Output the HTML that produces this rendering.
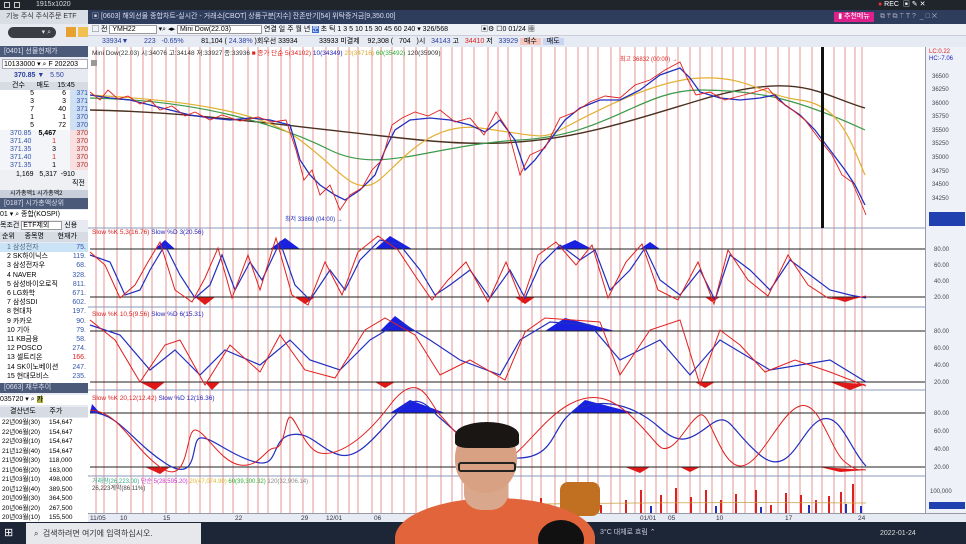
<!DOCTYPE html>
<html style="overflow:hidden;width:966px;height:544px"><head><meta charset="utf-8"><style>
*{margin:0;padding:0;box-sizing:border-box}
body{width:966px;height:544px;overflow:hidden;background:#dfe4ec;font-family:"Liberation Sans","Noto Sans CJK KR",sans-serif;font-size:7px;position:relative}
.a{position:absolute;white-space:nowrap}
</style></head><body>
<div class="a" style="left:0;top:0;width:966px;height:10px;background:#20242b;color:#ddd;font-size:7px;padding-left:36px;line-height:10px">1915x1020</div>
<div class="a" style="left:4px;top:2px;width:6px;height:6px;border:1px solid #ccc"></div>
<div class="a" style="left:14px;top:2px;width:6px;height:6px;border:1px solid #ccc"></div>
<div class="a" style="left:878px;top:0;color:#fff;font-size:7px;line-height:10px"><span style="color:#e33">●</span> REC &nbsp;▣ ✎ ✕</div>
<div class="a" style="left:0;top:10px;width:88px;height:512px;background:#e7eaf0"></div>
<div class="a" style="left:0;top:10px;width:88px;height:14px;background:#d9dde5;color:#333;line-height:14px;padding-left:6px">기능 주식 주식주문 ETF</div>
<div class="a" style="left:8px;top:27px;width:48px;height:11px;border-radius:6px;background:#3a3d44;color:#ddd;text-align:right;padding-right:5px;line-height:11px">▾ ⌕</div>
<div class="a" style="left:66px;top:27px;width:10px;height:10px;background:#e8a030"></div>
<div class="a" style="left:78px;top:27px;width:10px;height:10px;background:#f0c050"></div>
<div class="a" style="left:0;top:46px;width:88px;height:11px;background:#4a5a78;color:#dde;line-height:11px;padding-left:4px">[0401] 선물현재가</div>
<div class="a" style="left:2px;top:59px;width:86px;height:10px;background:#fff;border:1px solid #aab;line-height:9px;padding-left:1px">10133000 ▾ ⌕ F 202203</div>
<div class="a" style="left:0;top:71px;width:88px;height:10px;color:#2a3fa0;line-height:10px;padding-left:14px"><b>370.85 ▼</b> &nbsp; 5.50</div>
<div class="a" style="left:0;top:82px;width:88px;height:8px;background:#d6dbe4;line-height:8px;padding-left:12px">건수 &nbsp;&nbsp;&nbsp;&nbsp; 매도 &nbsp;&nbsp; 15:45</div>
<div class="a" style="left:0;top:90px;width:88px;height:40px;background:#fff"></div>
<div class="a" style="left:70px;top:90px;width:18px;height:40px;background:#cfe0f4;color:#35a;line-height:8px;text-align:right">371<br>371<br>371<br>370<br>370</div>
<div class="a" style="left:20px;top:90px;line-height:8px;text-align:right;width:14px">5<br>3<br>7<br>1<br>5</div>
<div class="a" style="left:48px;top:90px;line-height:8px;text-align:right;width:18px">6<br>3<br>40<br>1<br>72</div>
<div class="a" style="left:0;top:130px;width:70px;height:40px;background:#f3f5f8;color:#35a;line-height:8px;padding-left:10px">370.85<br>371.40<br>371.35<br>371.40<br>371.35</div>
<div class="a" style="left:70px;top:130px;width:18px;height:40px;background:#f8e0e0;color:#a33;line-height:8px;text-align:right">370<br>370<br>370<br>370<br>370</div>
<div class="a" style="left:38px;top:130px;line-height:8px;text-align:right;width:18px"><b>5,467</b><br><span style="color:#d22">1</span><br>3<br><span style="color:#d22">1</span><br>1</div>
<div class="a" style="left:0;top:170px;width:88px;height:20px;background:#eef0f4;line-height:9px;padding-left:16px">1,169 &nbsp; 5,317 &nbsp;-910<br><span style="margin-left:56px">직전</span></div>
<div class="a" style="left:0;top:190px;width:88px;height:8px;background:#c8ceda;font-size:6px;line-height:8px;padding-left:10px">시가총액1 시가총액2</div>
<div class="a" style="left:0;top:198px;width:88px;height:11px;background:#4a5a78;color:#dde;line-height:11px;padding-left:4px">[0187] 시가총액상위</div>
<div class="a" style="left:0;top:210px;width:88px;height:10px;background:#fff;line-height:10px">01 ▾ ⌕ 종합(KOSPI)</div>
<div class="a" style="left:0;top:221px;width:88px;height:10px;line-height:10px">목조건 <span style="background:#fff;border:1px solid #999;padding:0 12px 0 1px">ETF제외</span> 신용</div>
<div class="a" style="left:0;top:232px;width:88px;height:10px;background:#d6dbe4;line-height:10px;padding-left:2px">순위 &nbsp;&nbsp;&nbsp; 종목명 &nbsp;&nbsp;&nbsp;&nbsp;&nbsp; 현재가</div>
<div class="a" style="left:0;top:243px;width:88px;height:144px;background:#fff;line-height:9.2px;padding-left:7px">1 삼성전자<br>2 SK하이닉스<br>3 삼성전자우<br>4 NAVER<br>5 삼성바이오로직<br>6 LG화학<br>7 삼성SDI<br>8 현대차<br>9 카카오<br>10 기아<br>11 KB금융<br>12 POSCO<br>13 셀트리온<br>14 SK이노베이션<br>15 현대모비스</div>
<div class="a" style="left:0;top:243px;width:88px;height:9px;background:rgba(150,200,240,.5)"></div>
<div class="a" style="left:68px;top:243px;line-height:9.2px;color:#35a;text-align:right;width:18px">75.<br>119.<br>68.<br>328.<br>811.<br>671.<br>602.<br>197.<br>90.<br>79.<br>58.<br>274.<br><span style="color:#d22">166.</span><br>247.<br>235.</div>
<div class="a" style="left:0;top:383px;width:88px;height:10px;background:#4a5a78;color:#dde;line-height:10px;padding-left:4px">[0663] 재무추이</div>
<div class="a" style="left:0;top:395px;width:88px;height:10px;background:#fff;line-height:10px">035720 ▾ ⌕ <span style="background:#a8b040">카</span></div>
<div class="a" style="left:0;top:407px;width:88px;height:10px;background:#d6dbe4;line-height:10px;padding-left:10px">결산년도 &nbsp;&nbsp;&nbsp;&nbsp;&nbsp; 주가</div>
<div class="a" style="left:0;top:418px;width:88px;height:104px;background:#fff;line-height:9.5px;font-size:6.5px;padding-left:2px">22년09월(30) &nbsp;&nbsp;&nbsp; 154,647<br>22년06월(20) &nbsp;&nbsp;&nbsp; 154,647<br>22년03월(10) &nbsp;&nbsp;&nbsp; 154,647<br>21년12월(40) &nbsp;&nbsp;&nbsp; 154,647<br>21년09월(30) &nbsp;&nbsp;&nbsp; 118,000<br>21년06월(20) &nbsp;&nbsp;&nbsp; 163,000<br>21년03월(10) &nbsp;&nbsp;&nbsp; 498,000<br>20년12월(40) &nbsp;&nbsp;&nbsp; 389,500<br>20년09월(30) &nbsp;&nbsp;&nbsp; 364,500<br>20년06월(20) &nbsp;&nbsp;&nbsp; 267,500<br>20년03월(10) &nbsp;&nbsp;&nbsp; 155,500</div>
<div class="a" style="left:88px;top:10px;width:878px;height:14px;background:#2e3d5c;color:#dde;line-height:14px;padding-left:4px">▣ [0603] 해외선물 종합차트-실시간 - 거래소[CBOT] 상품구분[지수] 잔존만기[54] 위탁증거금[9,350.00]</div>
<div class="a" style="left:834px;top:12px;width:40px;height:10px;background:#e0208a;color:#fff;line-height:10px;text-align:center">▮ 추천메뉴</div>
<div class="a" style="left:880px;top:10px;color:#aab;line-height:14px">⧉ ₸ ⧉ ⊤ T ? &nbsp;_ □ ✕</div>
<div class="a" style="left:88px;top:24px;width:878px;height:12px;background:#eef1f6;border-bottom:1px solid #ccd;line-height:12px;padding-left:4px">▢ 전 <span style="background:#fff;border:1px solid #999;padding:0 20px 0 2px">YMH22</span> ▾⌕ ◂▸ <span style="background:#fff;border:1px solid #999;padding:0 30px 0 2px">Mini Dow(22.03)</span> 연결 일 주 월 년 <span style="background:#3a6ad0;color:#fff">분</span> 초 틱 1 3 5 10 15 30 45 60 240 ▾ 326/568 &nbsp;&nbsp;&nbsp;&nbsp;&nbsp;&nbsp;&nbsp;&nbsp;&nbsp;&nbsp;&nbsp;&nbsp;&nbsp;&nbsp;&nbsp; ▣⚙ ☐0 01/24 ▦</div>
<div class="a" style="left:88px;top:36px;width:878px;height:11px;background:#e6eaf2;line-height:11px;padding-left:14px"><span style="color:#2a3fa0">33934▼ &nbsp;&nbsp;&nbsp;&nbsp;&nbsp;&nbsp; 223 &nbsp; -0.65%</span> &nbsp;&nbsp;&nbsp;&nbsp;&nbsp;&nbsp;&nbsp; 81,104 ( <span style="color:#2a3fa0">24.38%</span> )회우선 33934 &nbsp;&nbsp;&nbsp;&nbsp;&nbsp;&nbsp;&nbsp;&nbsp;&nbsp; 33933 미결제 &nbsp;&nbsp; 92,308 ( &nbsp; 704 &nbsp; )시 &nbsp; <span style="color:#2a3fa0">34143</span> 고 &nbsp; <span style="color:#d22">34410</span> 저 &nbsp; <span style="color:#2a3fa0">33929</span> <span style="background:#f4c8c0;padding:0 4px">매수</span> <span style="background:#c8d4f0;padding:0 4px">매도</span></div>
<div class="a" style="left:88px;top:47px;width:837px;height:466px;background:#fff"></div>
<div class="a" style="left:925px;top:47px;width:41px;height:475px;background:#eef2f8;border-left:1px solid #99a"></div>
<div class="a" style="left:88px;top:513px;width:878px;height:9px;background:#e6eaf2;border-top:1px solid #99a"></div>
<svg class="a" style="left:0;top:0" width="966" height="544" viewBox="0 0 966 544">
<g stroke="#e07a7a" stroke-width="0.8">
<path d="M96 47V513M104 47V513M117 47V513M131 47V513M143 47V513M152 47V513M166 47V513M176 47V513M189 47V513M200 47V513M210 47V513M223 47V513M233 47V513M248 47V513M258 47V513M268 47V513M281 47V513M290 47V513M303 47V513M313 47V513M326 47V513M338 47V513M349 47V513M358 47V513M372 47V513M381 47V513M392 47V513M404 47V513M416 47V513M427 47V513M441 47V513M452 47V513M462 47V513M474 47V513M488 47V513M498 47V513M508 47V513M521 47V513M532 47V513M541 47V513M555 47V513M566 47V513M578 47V513M588 47V513M598 47V513M611 47V513M620 47V513M635 47V513M645 47V513M656 47V513M667 47V513M678 47V513M690 47V513M700 47V513M712 47V513M722 47V513M733 47V513M745 47V513M755 47V513M766 47V513M778 47V513M789 47V513M800 47V513M812 47V513M822 47V513M834 47V513M845 47V513M855 47V513M862 47V513"/>
</g>
<g stroke="#8899bb" stroke-width="1"><path d="M88 228H925M88 307H925M88 390H925M88 476H925"/></g>
<path d="M90 110 C200 112 300 128 420 140 S600 130 700 100 S820 95 865 108" fill="none" stroke="#4a3020" stroke-width="1.4"/>
<path d="M90 98 C200 100 280 125 330 150 S430 145 520 140 S640 90 700 90 S800 100 865 130" fill="none" stroke="#3a9a4a" stroke-width="1.2"/>
<path d="M90 95 C180 100 260 110 300 140 S350 190 370 185 S420 120 480 128 S540 140 560 130 S650 80 700 78 S760 95 800 100 S850 140 865 175" fill="none" stroke="#e0b030" stroke-width="1.2"/>
<path d="M90 95 L110 98 130 100 150 105 170 110 190 115 210 118 230 120 250 118 270 120 290 125 300 160 310 175 320 185 335 195 345 200 360 190 375 175 385 150 395 130 410 120 430 118 450 120 470 125 485 132 500 120 515 140 525 170 535 160 550 140 565 120 580 108 600 100 620 100 640 90 660 75 680 68 690 78 700 92 720 98 740 100 760 98 775 95 785 105 800 115 815 130 830 150 845 170 855 185 865 205" fill="none" stroke="#2030c0" stroke-width="1.3"/>
<path d="M90 92 L100 100 108 90 118 99 128 96 140 104 150 100 160 110 172 106 185 116 195 112 210 120 222 115 240 121 258 117 272 122 286 120 296 150 304 180 312 170 320 195 330 185 340 210 350 195 362 188 372 170 382 160 392 125 402 118 415 112 428 116 440 110 455 122 470 118 484 135 496 112 508 130 520 175 530 155 545 148 560 118 575 112 590 102 605 96 620 98 635 85 650 80 665 70 680 62 688 80 696 95 710 92 725 100 740 96 755 92 768 88 778 100 790 108 805 120 820 140 832 155 842 175 852 182 860 200 866 215" fill="none" stroke="#e02020" stroke-width="0.9"/>
<rect x="821" y="47" width="3" height="181" fill="#111"/>
<text x="620" y="61" font-size="6" fill="#d22">최고 36832 (00:00) →</text>
<text x="285" y="221" font-size="6" fill="#2030c0">최저 33860 (04:00) →</text>
<text x="92" y="55" font-size="6.5" fill="#333">Mini Dow(22.03) 시:34076 고:34148 저:33927 종:33936 <tspan fill="#d22">■ 종가 단순 5(34102)</tspan> <tspan fill="#22b">10(34349)</tspan> <tspan fill="#da3">20(34716)</tspan> <tspan fill="#3a3">60(35492)</tspan> 120(35909)</text>
<rect x="91" y="60" width="6" height="6" fill="#999"/>
<g fill="#1a20e0"><path d="M155 249 L165 240 175 249Z M270 249 L285 238 300 249Z M375 249 L390 236 412 249Z M555 249 L575 240 592 249Z M640 249 L650 242 660 249Z"/></g>
<g fill="#e01818"><path d="M195 297 L205 305 215 297Z M295 297 L305 304 315 297Z M515 297 L525 304 535 297Z M705 297 L712 302 720 297Z M830 297 L845 302 860 297Z"/></g>
<path d="M90 249H925M90 297H925" stroke="#222" stroke-width="1"/>
<path d="M90 255 L110 262 125 295 140 290 150 270 165 245 180 275 195 298 210 285 222 255 235 290 250 262 262 280 280 242 295 285 310 300 330 270 345 290 360 260 380 240 400 245 420 270 435 295 450 285 470 270 490 298 510 270 525 298 540 265 560 245 580 260 595 250 610 290 630 270 645 248 660 280 680 295 700 270 715 300 730 255 750 270 770 290 790 260 810 275 830 290 850 295 866 298" fill="none" stroke="#2030c0" stroke-width="1.2"/>
<path d="M90 252 L105 265 120 298 135 285 148 262 160 242 175 290 192 302 205 278 218 248 232 298 248 255 260 290 276 238 292 295 308 305 325 262 342 295 358 252 378 236 398 250 418 280 432 300 448 280 466 262 488 302 506 262 522 302 538 255 556 242 576 265 592 245 608 298 626 262 642 244 658 290 678 300 698 262 714 304 728 250 748 280 768 296 788 255 808 285 828 298 846 300 866 296" fill="none" stroke="#e02020" stroke-width="1"/>
<text x="92" y="234" font-size="6.5" fill="#d22">Slow %K 5,3(16.76) <tspan fill="#22b">Slow %D 3(20.56)</tspan></text>
<g fill="#1a20e0"><path d="M380 331 L395 316 415 331Z M545 331 L565 318 615 331Z"/></g>
<g fill="#e01818"><path d="M140 382 L155 390 165 382Z M205 382 L212 390 220 382Z M375 382 L385 388 395 382Z M695 382 L705 388 715 382Z M830 382 L850 390 866 384Z"/></g>
<path d="M90 331H925M90 382H925" stroke="#222" stroke-width="1"/>
<path d="M90 325 L120 335 150 370 175 350 200 375 225 350 260 365 290 340 310 360 340 370 370 340 400 322 430 340 460 360 500 375 520 340 550 322 590 325 620 360 660 340 690 375 720 340 745 355 770 370 800 365 830 360 866 382" fill="none" stroke="#2030c0" stroke-width="1.2"/>
<path d="M90 320 L115 340 140 382 165 345 180 340 205 385 230 345 260 372 280 335 305 370 335 378 365 330 385 318 415 335 440 375 470 360 505 380 525 332 545 318 600 322 620 375 650 330 680 320 700 385 720 330 740 345 765 372 795 360 830 372 866 386" fill="none" stroke="#e02020" stroke-width="1"/>
<text x="92" y="316" font-size="6.5" fill="#d22">Slow %K 10,5(9.56) <tspan fill="#22b">Slow %D 6(15.31)</tspan></text>
<g fill="#1a20e0"><path d="M90 413 L92 404 100 413Z M390 413 L410 400 445 413Z M570 413 L585 400 635 413Z"/></g>
<g fill="#e01818"><path d="M145 467 L160 474 170 467Z M625 467 L640 473 650 467Z M680 467 L690 472 700 467Z M820 467 L840 472 866 470Z"/></g>
<path d="M90 413H925M90 467H925" stroke="#222" stroke-width="1"/>
<path d="M90 412 C120 414 130 440 165 463 S190 440 200 438 S230 455 255 462 S270 440 290 435 S320 450 340 455 S380 430 400 410 S430 410 440 418 S480 460 520 458 S550 420 580 408 S640 410 660 428 S690 440 710 425 S730 430 760 455 S800 430 820 420 S850 450 866 466" fill="none" stroke="#2030c0" stroke-width="1.2"/>
<path d="M90 410 C120 412 130 445 160 467 S185 430 195 430 S220 462 240 465 S265 448 275 448 S285 418 290 417 S305 450 320 453 S360 445 390 405 S430 405 440 415 S480 465 500 462 S540 420 570 404 S620 404 640 425 S660 452 670 447 S690 420 700 415 S720 465 740 466 S780 412 800 406 S830 450 845 462 S860 468 866 470" fill="none" stroke="#e02020" stroke-width="1"/>
<text x="92" y="400" font-size="6.5" fill="#d22">Slow %K 20,12(12.42) <tspan fill="#22b">Slow %D 12(16.36)</tspan></text>
<text x="92" y="483" font-size="6" fill="#3a8"> 거래량(26,223.00) <tspan fill="#c3c">단순 5(28,595.20)</tspan> <tspan fill="#db3">20(47,074.90)</tspan> <tspan fill="#3a3">60(39,300.32)</tspan> <tspan fill="#888">120(32,906.14)</tspan></text>
<text x="92" y="490" font-size="6" fill="#444">26,223계약(86.11%)</text>
<g fill="#e02020"><path d="M500 500h2v13h-2zM525 505h2v8h-2zM540 498h2v15h-2zM560 503h2v10h-2zM600 505h2v8h-2zM625 500h2v13h-2zM640 490h2v23h-2zM660 495h2v18h-2zM675 488h2v25h-2zM690 497h2v16h-2zM705 490h2v23h-2zM720 500h2v13h-2zM735 494h2v19h-2zM755 490h2v23h-2zM770 505h2v8h-2zM785 493h2v20h-2zM800 495h2v18h-2zM815 500h2v13h-2zM828 496h2v17h-2zM840 492h2v21h-2zM852 484h2v29h-2z"/></g>
<g fill="#2030c0"><path d="M505 507h2v6h-2zM545 508h2v5h-2zM580 507h2v6h-2zM650 506h2v7h-2zM715 506h2v7h-2zM760 507h2v6h-2zM808 505h2v8h-2zM845 504h2v9h-2zM860 506h2v7h-2z"/></g>
<path d="M480 505 C600 503 700 502 866 503" fill="none" stroke="#c8a040" stroke-width="0.8"/>
<g font-size="6.5" fill="#334"><text x="90" y="520">11/05</text><text x="120" y="520">10</text><text x="163" y="520">15</text><text x="235" y="520">22</text><text x="301" y="520">29</text><text x="326" y="520">12/01</text><text x="374" y="520">06</text><text x="552" y="520">27</text><text x="640" y="520">01/01</text><text x="668" y="520">05</text><text x="716" y="520">10</text><text x="785" y="520">17</text><text x="858" y="520">24</text></g>
<g font-size="6" fill="#445"><text x="929" y="53" fill="#d22">LC:0.22</text><text x="929" y="60" fill="#22b">HC:-7.06</text><text x="932" y="78">36500</text><text x="932" y="91">36250</text><text x="932" y="105">36000</text><text x="932" y="118">35750</text><text x="932" y="132">35500</text><text x="932" y="145">35250</text><text x="932" y="159">35000</text><text x="932" y="173">34750</text><text x="932" y="186">34500</text><text x="932" y="200">34250</text>
<text x="934" y="251">80.00</text><text x="934" y="267">60.00</text><text x="934" y="283">40.00</text><text x="934" y="299">20.00</text>
<text x="934" y="333">80.00</text><text x="934" y="350">60.00</text><text x="934" y="367">40.00</text><text x="934" y="384">20.00</text>
<text x="934" y="415">80.00</text><text x="934" y="433">60.00</text><text x="934" y="451">40.00</text><text x="934" y="469">20.00</text><text x="930" y="493">100,000</text></g>
<rect x="929" y="212" width="36" height="14" fill="#2040b0"/>
<rect x="929" y="502" width="36" height="7" fill="#2040b0"/>
</svg>
<div class="a" style="left:0;top:522px;width:966px;height:22px;background:#1c2636"></div>
<div class="a" style="left:4px;top:527px;width:12px;height:12px;color:#fff;font-size:11px;line-height:12px">⊞</div>
<div class="a" style="left:26px;top:523px;width:175px;height:21px;background:#e6e8ec;color:#333;font-size:8px;line-height:21px;padding-left:8px">⌕ &nbsp;검색하려면 여기에 입력하십시오.</div>
<div class="a" style="left:880px;top:530px;color:#ddd;font-size:7px">2022-01-24</div>
<div class="a" style="left:600px;top:527px;color:#ccd;font-size:7px">3°C 대체로 흐림 ⌃</div>
<div class="a" style="left:380px;top:400px;width:230px;height:144px;overflow:hidden">
<div class="a" style="left:180px;top:82px;width:40px;height:34px;border-radius:8px;background:#c07020"></div>
<div class="a" style="left:15px;top:98px;width:200px;height:80px;border-radius:50% 50% 0 0;background:#e2643a"></div>
<div class="a" style="left:84px;top:70px;width:44px;height:40px;background:#d9a88c;border-radius:40%"></div>
<div class="a" style="left:75px;top:25px;width:62px;height:68px;border-radius:48%;background:#d8a184"></div>
<div class="a" style="left:75px;top:22px;width:64px;height:26px;border-radius:50% 50% 20% 20%;background:#1a1614"></div>
<div class="a" style="left:78px;top:62px;width:58px;height:10px;border:2px solid #222;border-radius:3px"></div>
<div class="a" style="left:158px;top:120px;width:46px;height:40px;border-radius:50%;background:#111"></div>
</div>
</body></html>
